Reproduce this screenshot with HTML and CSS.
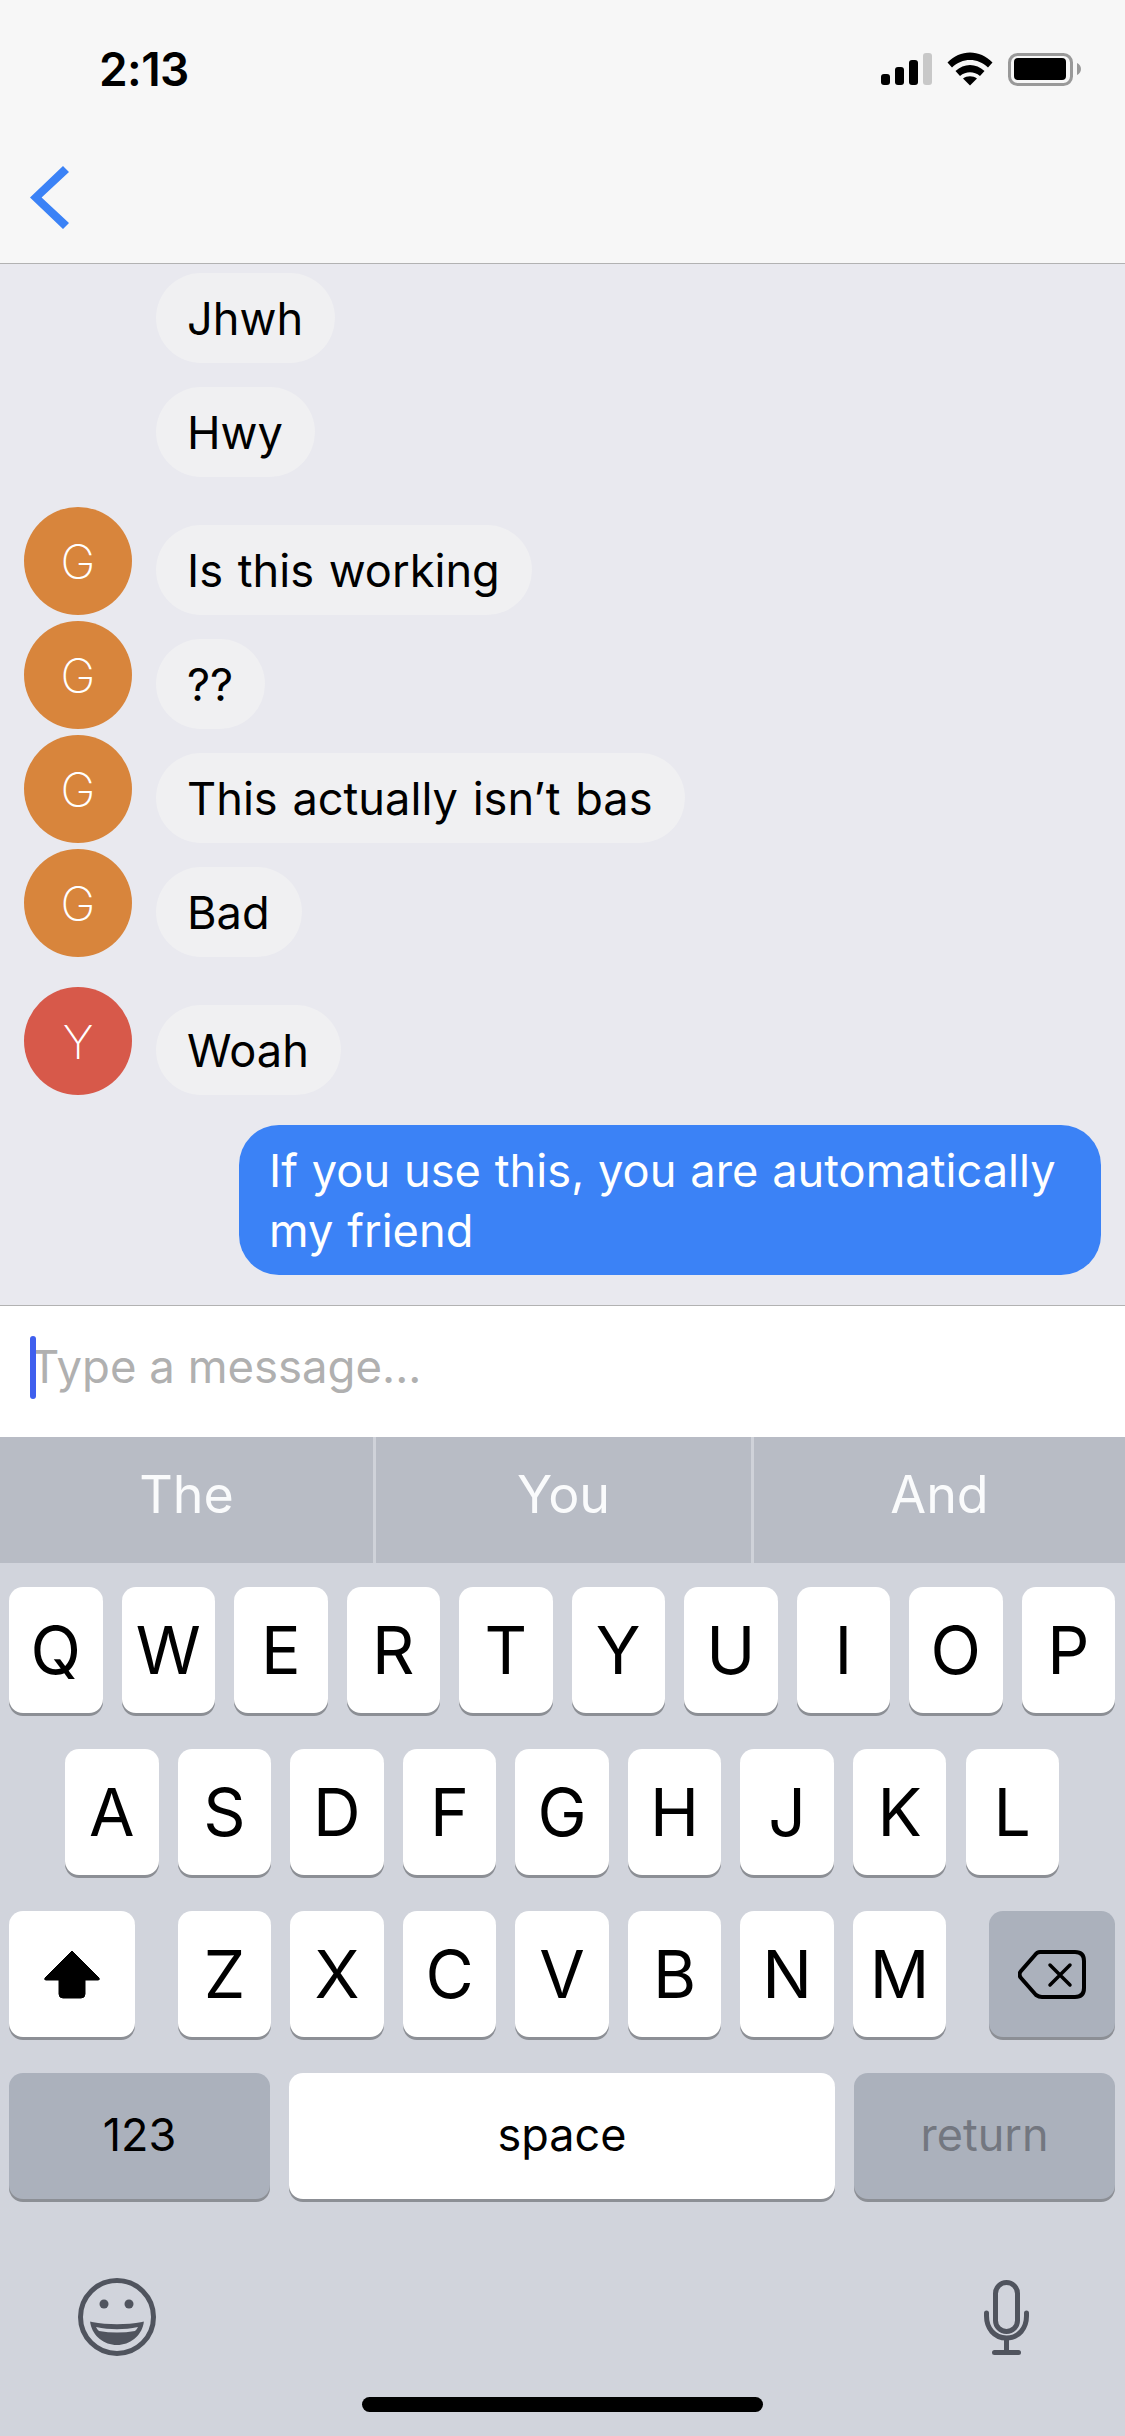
FILE: index.html
```html
<!DOCTYPE html>
<html lang="en">
<head>
<meta charset="utf-8">
<title>Chat</title>
<link rel="stylesheet" href="styles.css">
</head>
<body>
<div class="app">
  <header class="topbar">
    <div class="status">
      <span class="time">2:13</span>
      <div class="status-icons">
        <svg class="signal" width="51" height="32" viewBox="0 0 51 32"><rect x="0" y="21" width="9" height="11" rx="3" fill="#000"/><rect x="14" y="14" width="9" height="18" rx="3" fill="#000"/><rect x="28" y="7" width="9" height="25" rx="3" fill="#000"/><rect x="42" y="0" width="9" height="32" rx="3" fill="#c8c8c8"/></svg>
        <svg class="wifi" width="46" height="34" viewBox="0 0 46 34"><path d="M0.5 10.5 C13 -3 33 -3 45.500 10.500 L41 15.500 C31 5.500 15 5.500 5 15.500 Z" fill="#000"/><path d="M8.500 19 C17 11 29 11 37.500 19 L33 24 C27 19 19 19 13 24 Z" fill="#000"/><path d="M16 26.500 C20 23.500 26 23.500 30 26.500 L23 33.500 Z" fill="#000"/></svg>
        <svg class="battery" width="73" height="33" viewBox="0 0 73 33"><rect x="1.500" y="1.500" width="62" height="30" rx="8" fill="none" stroke="#999" stroke-width="3"/><rect x="6" y="5" width="52" height="22" rx="4" fill="#000"/><path d="M69 10 C71.500 11 73 13.500 73 16 C73 18.500 71.500 21 69 22 Z" fill="#999"/></svg>
      </div>
    </div>
    <div class="nav">
      <svg class="back" width="39" height="63" viewBox="0 0 39 63"><polygon points="33,0 39,6 11.600,31.500 39,57 33,63 0,31.500" fill="#3b82f6"/></svg>
    </div>
  </header>

  <main class="messages">
    <div class="row plain"><div class="bubble">Jhwh</div></div>
    <div class="row plain"><div class="bubble">Hwy</div></div>
    <div class="row has-avatar group-start"><div class="avatar orange">G</div><div class="bubble">Is this working</div></div>
    <div class="row has-avatar"><div class="avatar orange">G</div><div class="bubble">??</div></div>
    <div class="row has-avatar"><div class="avatar orange">G</div><div class="bubble">This actually isn’t bas</div></div>
    <div class="row has-avatar"><div class="avatar orange">G</div><div class="bubble">Bad</div></div>
    <div class="row has-avatar group-start"><div class="avatar red">Y</div><div class="bubble">Woah</div></div>
    <div class="row mine group-start"><div class="bubble blue">If you use this, you are automatically my friend</div></div>
  </main>

  <div class="composer"><span class="caret"></span><span class="placeholder">Type a message...</span></div>

  <div class="suggestions">
    <div class="suggestion">The</div>
    <div class="suggestion">You</div>
    <div class="suggestion">And</div>
  </div>

  <section class="keyboard">
    <div class="keys">
      <div class="key-row">
        <div class="key">Q</div><div class="key">W</div><div class="key">E</div><div class="key">R</div><div class="key">T</div><div class="key">Y</div><div class="key">U</div><div class="key">I</div><div class="key">O</div><div class="key">P</div>
      </div>
      <div class="key-row center">
        <div class="key">A</div><div class="key">S</div><div class="key">D</div><div class="key">F</div><div class="key">G</div><div class="key">H</div><div class="key">J</div><div class="key">K</div><div class="key">L</div>
      </div>
      <div class="key-row between">
        <div class="key wide"><svg width="58" height="50" viewBox="0 0 58 50"><path d="M29 2 L56 29 Q57 31 55 31 L42 31 L42 45 Q42 49 38 49 L20 49 Q16 49 16 45 L16 31 L3 31 Q1 31 2 29 Z" fill="#000" stroke="#000" stroke-width="1" stroke-linejoin="round"/></svg></div>
        <div class="letters">
          <div class="key">Z</div><div class="key">X</div><div class="key">C</div><div class="key">V</div><div class="key">B</div><div class="key">N</div><div class="key">M</div>
        </div>
        <div class="key wide dark"><svg width="68" height="49" viewBox="0 0 68 49"><path d="M22 2 L57 2 Q66 2 66 11 L66 38 Q66 47 57 47 L24 47 Q21 47 18 45 L3 28 Q0 24.500 3 21 L17 5 Q19 2 22 2 Z" fill="none" stroke="#000" stroke-width="4" stroke-linejoin="round"/><path d="M32 15 L52 35 M52 15 L32 35" fill="none" stroke="#000" stroke-width="3.500" stroke-linecap="round"/></svg></div>
      </div>
      <div class="key-row bottom">
        <div class="key dark num">123</div>
        <div class="key space">space</div>
        <div class="key dark ret">return</div>
      </div>
    </div>
    <div class="kb-tools">
      <svg width="78" height="78" viewBox="0 0 78 78"><circle cx="39" cy="39" r="36.500" fill="none" stroke="#50545e" stroke-width="5"/><circle cx="26" cy="26" r="4.500" fill="#50545e"/><circle cx="51" cy="26" r="4.500" fill="#50545e"/><path d="M14 44 C12 43 12 43 12.500 46 C15 58 26 67 39 67 C52 67 63 58 65.500 46 C66 43 66 43 64 44 C48 47 30 47 14 44 Z" fill="#50545e"/><path d="M18 49 C32 52 46 52 60 49 C59 51 58 52 57 53 C45 55 33 55 21 53 C20 52 19 51 18 49 Z" fill="#d1d4dc"/></svg>
      <svg class="mic" width="45" height="75" viewBox="0 0 45 75"><rect x="11.500" y="2.500" width="22" height="49" rx="11" fill="none" stroke="#50545e" stroke-width="5"/><path d="M2.500 33 L2.500 36 C2.500 48 10 58 22.500 58 C35 58 42.500 48 42.500 36 L42.500 33" fill="none" stroke="#50545e" stroke-width="5" stroke-linecap="round"/><path d="M22.500 58 L22.500 72" stroke="#50545e" stroke-width="5"/><rect x="8" y="70" width="29" height="5" rx="2.500" fill="#50545e"/></svg>
    </div>
    <div class="home"></div>
  </section>
</div>
</body>
</html>
```
FILE: styles.css
```css
* { box-sizing: border-box; }
html, body { margin: 0; padding: 0; }
body { width: 1125px; height: 2436px; overflow: hidden; background: #d1d4dc; font-family: Inter, "Liberation Sans", sans-serif; }
.app { width: 1125px; height: 2436px; display: flex; flex-direction: column; }

.topbar { height: 264px; background: #f7f7f7; border-bottom: 1px solid #b2b2b2; display: flex; flex-direction: column; flex: none; }
.status { height: 166px; display: flex; justify-content: space-between; padding: 52px 44px 0 99px; }
.time { font-size: 46px; font-weight: 600; line-height: 34px; letter-spacing: -0.600px; color: #000; }
.status-icons { display: flex; align-items: flex-start; height: 34px; }
.signal { margin-top: 1px; margin-right: 15px; }
.wifi { margin-right: 15px; }
.battery { margin-top: 1px; }
.nav { padding-left: 30px; }
.back { display: block; }

.messages { height: 1041px; flex: none; background: #e9e9ef; padding: 9px 24px 0 24px; display: flex; flex-direction: column; }
.row { display: flex; align-items: flex-end; margin-bottom: 6px; }
.row.plain { padding-left: 132px; }
.row.plain + .row.plain { margin-top: 18px; }
.row.has-avatar { gap: 24px; }
.row.group-start { margin-top: 24px; }
.row.mine { justify-content: flex-end; }
.bubble { background: #f0f0f2; color: #000; font-size: 45.200px; word-spacing: 2px; line-height: 60px; padding: 16px 32px 14px 31px; border-radius: 45px; }
.bubble.blue { background: #3b82f6; color: #fff; width: 862px; padding-left: 30px; word-spacing: 1.200px; border-radius: 40px; }
.avatar { width: 108px; height: 108px; border-radius: 50%; color: #fff; font-size: 47px; font-weight: 250; display: flex; align-items: center; justify-content: center; flex: none; }
.avatar.orange { background: #d8853c; }
.avatar.red { background: #d7594a; }

.composer { height: 132px; flex: none; background: #fff; border-top: 1px solid #b2b2b2; display: flex; align-items: center; padding: 0 0 10px 30px; position: relative; }
.caret { position: absolute; left: 30px; top: 30px; width: 6px; height: 63px; border-radius: 3px; background: #3f5fee; }
.placeholder { font-size: 45.500px; color: #b0b0b0; }

.suggestions { height: 126px; flex: none; background: #b8bcc5; display: grid; grid-template-columns: 373px 378px 1fr; }
.suggestion { display: flex; align-items: center; justify-content: center; padding-bottom: 12px; color: #fafbfc; font-size: 52px; border-left: 3px solid #cfd2d9; }
.suggestion:first-child { border-left: none; }

.keyboard { flex: 1; background: #d1d4dc; position: relative; padding: 24px 10px 0 9px; }
.keys { display: flex; flex-direction: column; gap: 36px; }
.key-row { display: flex; justify-content: space-between; }
.key-row.center { padding: 0 56px; }
.letters { display: flex; gap: 19px; }
.key { width: 93.500px; height: 126px; background: #fff; border-radius: 14px; box-shadow: 0 3px 0 #8c8f95; font-size: 66px; color: #000; display: flex; align-items: center; justify-content: center; }
.key.wide { width: 126px; }
.key.dark { background: #abb1bc; }
.key-row.bottom .key { font-size: 45px; padding-bottom: 3px; }
.key.num { width: 261px; }
.key.space { width: 546px; }
.key.ret { width: 261px; color: #737780; }

.kb-tools { display: flex; justify-content: space-between; align-items: flex-start; padding: 79px 86px 0 69px; }
.mic { margin-top: 2px; }
.home { position: absolute; left: 362px; top: 834px; width: 401px; height: 15px; border-radius: 8px; background: #000; }
```
